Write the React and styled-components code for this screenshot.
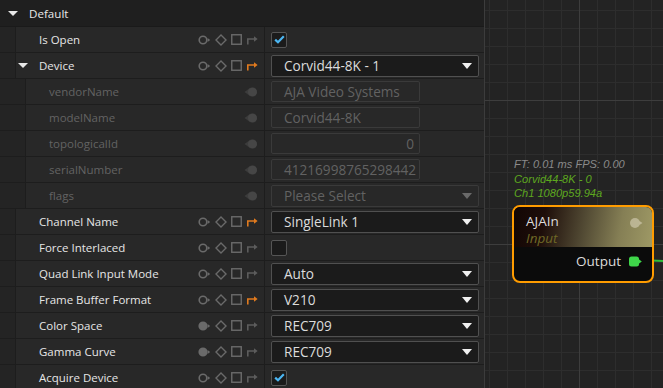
import React from "react";
import styled, { createGlobalStyle } from "styled-components";

const GlobalStyle = createGlobalStyle`
  html, body { margin: 0; padding: 0; background: #232323; overflow: hidden; }
  body { font-family: "Open Sans", "Noto Sans", sans-serif; }
  #root { width: 663px; height: 388px; }
`;

const Layout = styled.div`
  display: flex;
  width: 663px;
  height: 388px;
  overflow: hidden;
`;

const Inspector = styled.div`
  width: 484px;
  flex: none;
  background: #282828;
  border-right: 1px solid #3c3c3c;
  display: flex;
  flex-direction: column;
`;

const GroupHeader = styled.div`
  height: 26px;
  flex: none;
  display: flex;
  align-items: center;
  background: #1f1f1f;
  border-bottom: 1px solid #1a1a1a;
  color: #e8e8e8;
  font-size: 11.6px;
  padding-left: 8px;
  gap: 11px;
`;

const Caret = styled.span`
  width: 0;
  height: 0;
  border-left: 5px solid transparent;
  border-right: 5px solid transparent;
  border-top: 5px solid #e8e8e8;
  flex: none;
`;

const Row = styled.div`
  height: 25px;
  flex: none;
  display: flex;
  border-bottom: 1px solid #1d1d1d;
  font-size: 11.5px;
`;

const Gutter = styled.div`
  width: ${(p) => (p.$depth === 2 ? 25 : 15)}px;
  flex: none;
  background: #242424;
  border-right: 1px solid #1d1d1d;
`;

const LabelCell = styled.div`
  flex: 1;
  display: flex;
  align-items: center;
  border-right: 1px solid #1d1d1d;
  padding-right: 6px;
  min-width: 0;
`;

const CaretSlot = styled.div`
  width: 23px;
  flex: none;
  display: flex;
  justify-content: flex-start;
  padding-left: 2px;
  box-sizing: border-box;
`;

const Label = styled.span`
  flex: 1;
  color: ${(p) => (p.$muted ? "#636363" : "#e6e6e6")};
  white-space: nowrap;
`;

const IconGroup = styled.div`
  display: flex;
  align-items: center;
  gap: 4px;
`;

const ValueCell = styled.div`
  width: 219px;
  flex: none;
  display: flex;
  align-items: center;
  padding-left: 6px;
  box-sizing: border-box;
`;

const Select = styled.div`
  width: 208px;
  height: 22px;
  box-sizing: border-box;
  display: flex;
  align-items: center;
  justify-content: space-between;
  padding: 0 6px 0 12px;
  background: ${(p) => (p.$disabled ? "#282828" : "#1b1b1b")};
  border: 1px solid ${(p) => (p.$disabled ? "#3a3a3a" : "#505050")};
  border-radius: 2px;
  color: ${(p) => (p.$disabled ? "#626262" : "#dcdcdc")};
  font-size: 13.6px;
`;

const SelectArrow = styled.span`
  width: 0;
  height: 0;
  border-left: 5px solid transparent;
  border-right: 5px solid transparent;
  border-top: 6px solid ${(p) => (p.$disabled ? "#6a6a6a" : "#f0f0f0")};
`;

const TextInput = styled.div`
  width: 149px;
  height: 21px;
  box-sizing: border-box;
  display: flex;
  align-items: center;
  justify-content: ${(p) => (p.$right ? "flex-end" : "flex-start")};
  padding: 0 5px 0 12px;
  background: #282828;
  border: 1px solid #3a3a3a;
  border-radius: 2px;
  color: #626262;
  font-size: 13.6px;
  white-space: nowrap;
  overflow: hidden;
`;

const Checkbox = styled.div`
  width: 16px;
  height: 16px;
  box-sizing: border-box;
  background: #1b1b1b;
  border: 1px solid #555;
  border-radius: 2px;
  display: flex;
  align-items: center;
  justify-content: center;
`;

const Canvas = styled.div`
  flex: 1;
  position: relative;
  background-color: #232323;
  background-image:
    linear-gradient(to right, #3d3d3d 1px, transparent 1px),
    linear-gradient(to bottom, #3d3d3d 1px, transparent 1px),
    linear-gradient(to right, #2d2d2d 1px, transparent 1px),
    linear-gradient(to bottom, #2d2d2d 1px, transparent 1px);
  background-size: 144px 144px, 144px 144px, 18px 18px, 18px 18px;
  background-position: 94px 100px, 94px 100px, 4px 10px, 4px 10px;
`;

const NodeInfo = styled.div`
  position: absolute;
  left: 29px;
  top: 157px;
  font-family: "Liberation Sans", Arial, sans-serif;
  font-size: 11.1px;
  font-style: italic;
  line-height: 14.5px;
  white-space: nowrap;
`;

const InfoLine = styled.div`
  color: ${(p) => (p.$green ? "#5ea81f" : "#8a8a8a")};
`;

const Node = styled.div`
  position: absolute;
  left: 27px;
  top: 205px;
  width: 142px;
  height: 78px;
  box-sizing: border-box;
  border: 2px solid #ff9c00;
  border-radius: 8px;
  overflow: hidden;
  background: #0b0b0b;
  display: flex;
  flex-direction: column;
`;

const NodeTitle = styled.div`
  height: 40px;
  flex: none;
  position: relative;
  padding: 6px 0 0 12px;
  box-sizing: border-box;
  background:
    linear-gradient(100deg, #120604 0%, #1e0e0a 22%, #514933 50%, #857f55 76%, #9e9965 100%);
`;

const NodeName = styled.div`
  color: #dcdcdc;
  font-size: 13.5px;
  line-height: 17px;
`;

const NodeType = styled.div`
  color: #6f6826;
  font-size: 13.5px;
  font-style: italic;
  line-height: 17px;
`;

const InPin = styled.svg`
  position: absolute;
  right: 9px;
  top: 10px;
`;

const NodeOutputs = styled.div`
  flex: 1;
  display: flex;
  align-items: center;
  justify-content: flex-end;
  gap: 8px;
  padding-right: 10px;
  padding-bottom: 6px;
  color: #dcdcdc;
  font-size: 13.5px;
`;

const Wire = styled.svg`
  position: absolute;
  left: 156px;
  top: 255px;
`;

const GREY = "#6a6a6a";
const ORANGE = "#e07a1e";

const PinIcon = ({ filled }) => (
  <svg width="13" height="12" viewBox="0 0 13 12">
    <circle cx="5" cy="6" r="3.8" fill={filled ? GREY : "none"} stroke={GREY} strokeWidth="1.6" />
    <polygon points="9.6,4 12.2,6 9.6,8" fill={GREY} />
  </svg>
);

const DiamondIcon = () => (
  <svg width="12" height="12" viewBox="0 0 12 12">
    <polygon points="6,1 11,6 6,11 1,6" fill="none" stroke={GREY} strokeWidth="1.4" />
  </svg>
);

const SquareIcon = () => (
  <svg width="11" height="11" viewBox="0 0 11 11">
    <rect x="0.75" y="0.75" width="9.5" height="9.5" fill="none" stroke={GREY} strokeWidth="1.4" />
  </svg>
);

const ArrowIcon = ({ active }) => {
  const c = active ? ORANGE : "#5c5c5c";
  return (
    <svg width="12" height="10" viewBox="0 0 12 10">
      <path d="M1.8 9.5 V4 H8.5" fill="none" stroke={c} strokeWidth="1.6" />
      <polygon points="8,1.3 11.6,4 8,6.7" fill={c} />
    </svg>
  );
};

const MutedPin = () => (
  <svg width="14" height="12" viewBox="0 0 14 12">
    <polygon points="0.5,6 6,2 6,10" fill="#3c3c3c" />
    <circle cx="8.5" cy="6" r="4.6" fill="#464646" />
  </svg>
);

const Check = () => (
  <svg width="11" height="9" viewBox="0 0 11 9">
    <path d="M1.2 4.6 L4 7.3 L9.8 1.3" fill="none" stroke="#4cb6f2" strokeWidth="2.2" />
  </svg>
);

const rows = [
  { label: "Is Open", value: { type: "check", checked: true } },
  { label: "Device", caret: true, arrow: true, value: { type: "select", text: "Corvid44-8K - 1" } },
  { label: "vendorName", depth: 2, value: { type: "text", text: "AJA Video Systems" } },
  { label: "modelName", depth: 2, value: { type: "text", text: "Corvid44-8K" } },
  { label: "topologicalId", depth: 2, value: { type: "text", text: "0", right: true } },
  { label: "serialNumber", depth: 2, value: { type: "text", text: "41216998765298442" } },
  { label: "flags", depth: 2, value: { type: "select", text: "Please Select", disabled: true } },
  { label: "Channel Name", arrow: true, value: { type: "select", text: "SingleLink 1" } },
  { label: "Force Interlaced", value: { type: "check", checked: false } },
  { label: "Quad Link Input Mode", value: { type: "select", text: "Auto" } },
  { label: "Frame Buffer Format", arrow: true, value: { type: "select", text: "V210" } },
  { label: "Color Space", filled: true, value: { type: "select", text: "REC709" } },
  { label: "Gamma Curve", filled: true, value: { type: "select", text: "REC709" } },
  { label: "Acquire Device", value: { type: "check", checked: true } },
];

const Value = ({ value }) => {
  if (value.type === "check")
    return <Checkbox>{value.checked && <Check />}</Checkbox>;
  if (value.type === "select")
    return (
      <Select $disabled={value.disabled}>
        <span>{value.text}</span>
        <SelectArrow $disabled={value.disabled} />
      </Select>
    );
  return <TextInput $right={value.right}>{value.text}</TextInput>;
};

const PropRow = ({ row }) => {
  const nested = row.depth === 2;
  return (
    <Row>
      <Gutter $depth={row.depth} />
      <LabelCell>
        <CaretSlot>{row.caret && <Caret />}</CaretSlot>
        <Label $muted={nested}>{row.label}</Label>
        {nested ? (
          <MutedPin />
        ) : (
          <IconGroup>
            <PinIcon filled={row.filled} />
            <DiamondIcon />
            <SquareIcon />
            <ArrowIcon active={row.arrow} />
          </IconGroup>
        )}
      </LabelCell>
      <ValueCell>
        <Value value={row.value} />
      </ValueCell>
    </Row>
  );
};

export default function App() {
  return (
    <>
      <GlobalStyle />
      <Layout>
        <Inspector>
          <GroupHeader>
            <Caret />
            <span>Default</span>
          </GroupHeader>
          {rows.map((r) => (
            <PropRow key={r.label} row={r} />
          ))}
        </Inspector>
        <Canvas>
          <NodeInfo>
            <InfoLine>FT: 0.01 ms FPS: 0.00</InfoLine>
            <InfoLine $green>Corvid44-8K - 0</InfoLine>
            <InfoLine $green>Ch1 1080p59.94a</InfoLine>
          </NodeInfo>
          <Wire width="24" height="10" viewBox="0 0 24 10">
            <path d="M0 5 Q12 5.5 24 6" fill="none" stroke="#2fbf3a" strokeWidth="2" />
          </Wire>
          <Node>
            <NodeTitle>
              <NodeName>AJAIn</NodeName>
              <NodeType>Input</NodeType>
              <InPin width="14" height="12" viewBox="0 0 14 12">
                <circle cx="6" cy="6" r="5" fill="#c9c3a6" opacity="0.75" />
                <polygon points="10.5,4 13.5,6 10.5,8" fill="#c9c3a6" opacity="0.75" />
              </InPin>
            </NodeTitle>
            <NodeOutputs>
              <span>Output</span>
              <svg width="13" height="11" viewBox="0 0 13 11">
                <rect x="0" y="0.5" width="10" height="10" rx="2.5" fill="#3fd64a" />
                <polygon points="9.5,3 12.8,5.5 9.5,8" fill="#3fd64a" />
              </svg>
            </NodeOutputs>
          </Node>
        </Canvas>
      </Layout>
    </>
  );
}
